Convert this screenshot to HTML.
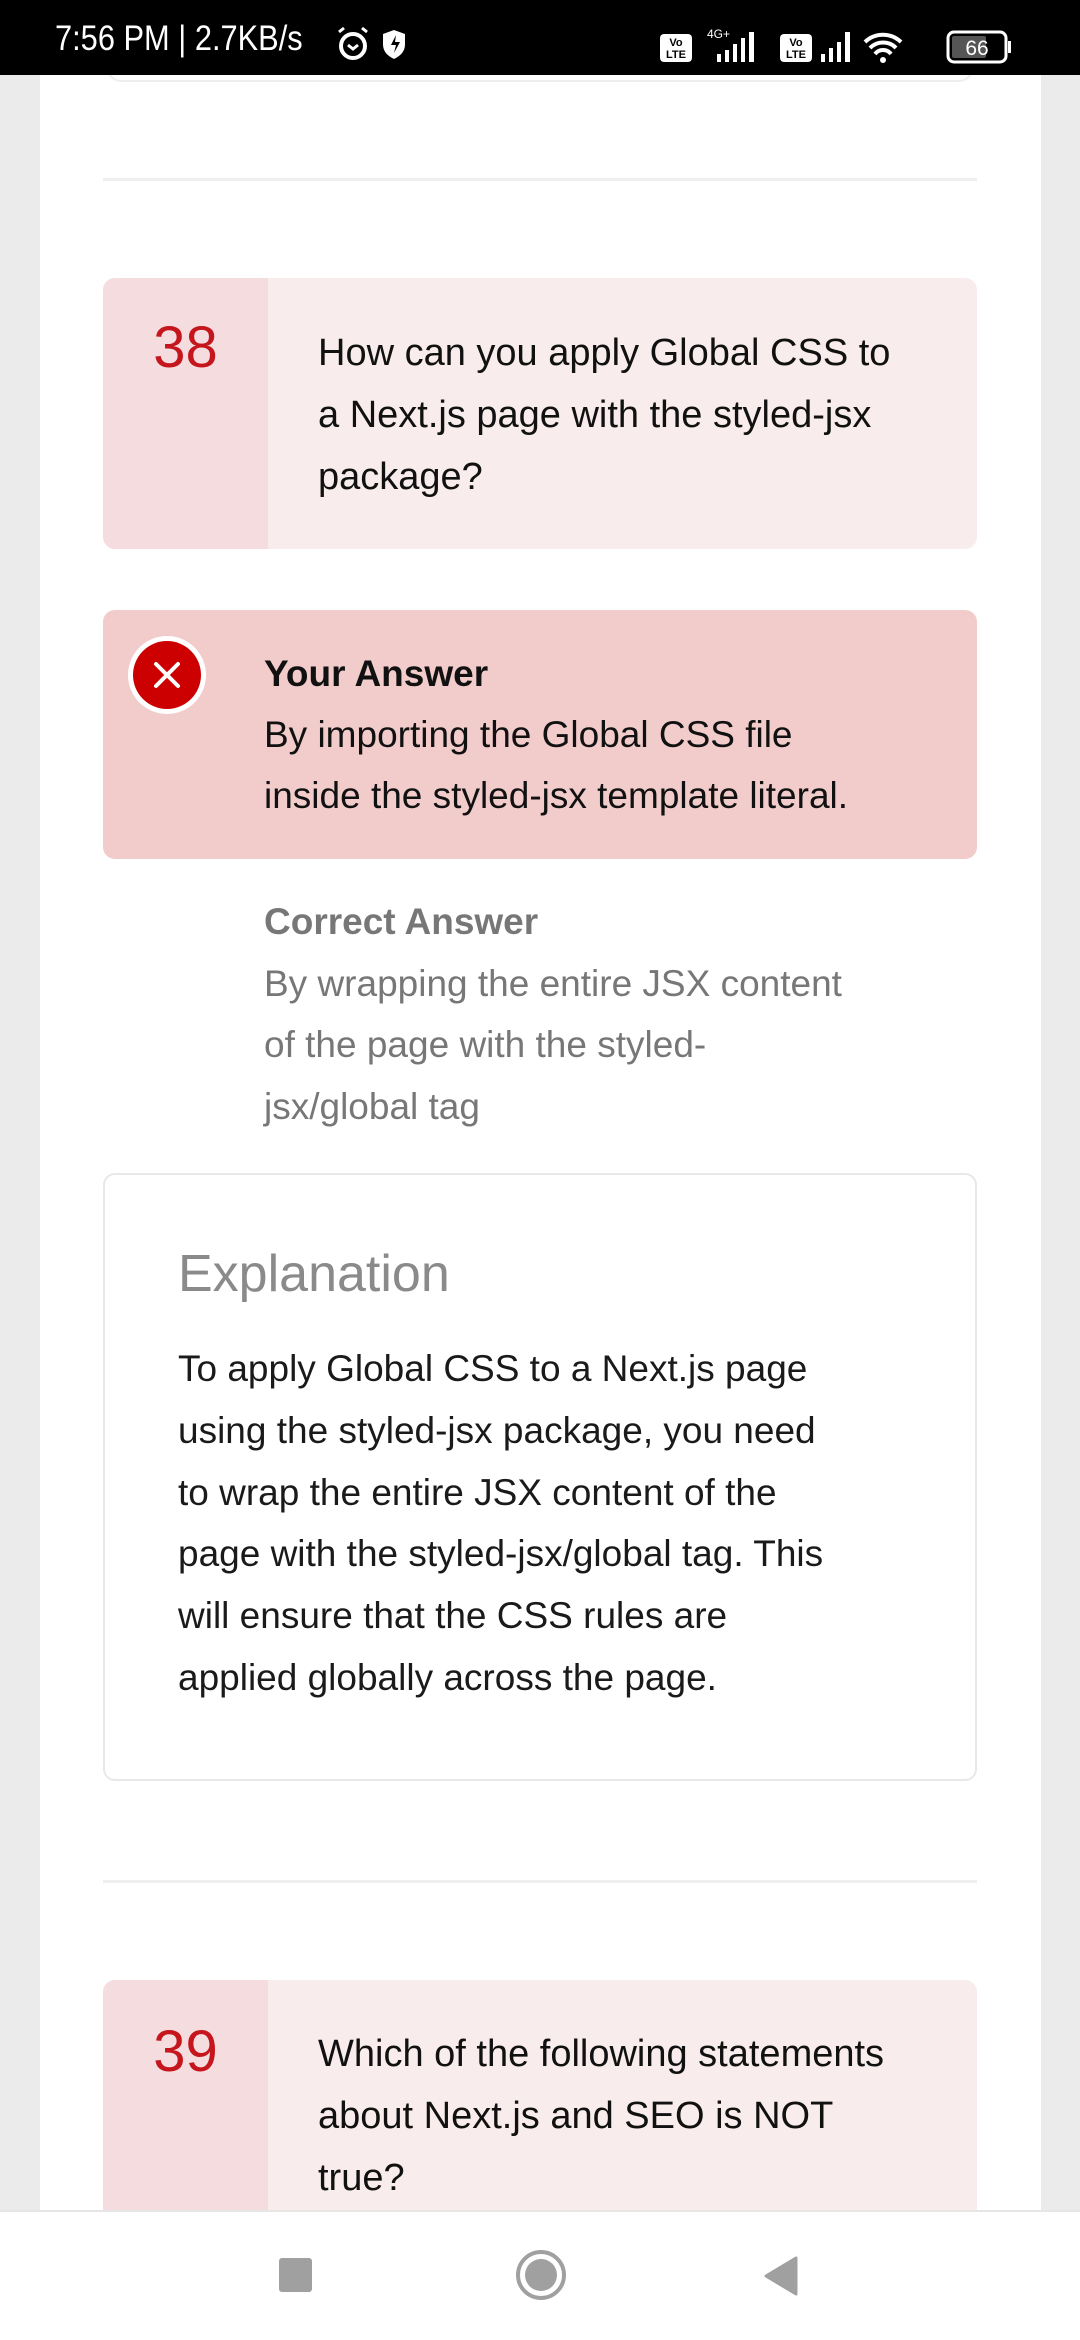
<!DOCTYPE html>
<html><head><meta charset="utf-8">
<style>
*{margin:0;padding:0;box-sizing:border-box}
body{width:1080px;height:2340px;overflow:hidden;background:#ebebeb;font-family:"Liberation Sans",sans-serif;position:relative}
.abs{position:absolute}
.card{left:40px;top:0;width:1001px;height:2340px;background:#fff}
.status{left:0;top:0;width:1080px;height:75px;background:#000;color:#fff}
.line{white-space:nowrap}
.sep{height:3px;background:#efefef;left:103px;width:874px}
.q{left:103px;width:874px;background:#f9ecec;border-radius:12px;overflow:hidden}
.qn{left:0;top:0;width:165px;height:100%;background:#f5dcdf}
.num{color:#c4161c;font-size:58px;width:165px;text-align:center}
.qt{left:215px;font-size:38px;color:#111;line-height:62px}
</style></head><body>
<div class="abs card"></div>
<div class="abs" style="left:107px;top:60px;width:866px;height:22px;border:2px solid #eee;border-top:none;border-radius:0 0 14px 14px"></div>
<div class="abs status">
 <div class="abs" style="left:55px;top:20px;font-size:35px;line-height:38px;transform:scaleX(0.88);transform-origin:0 0">7:56 PM | 2.7KB/s</div>
 <svg class="abs" style="left:334px;top:24px" width="80" height="40" viewBox="0 0 80 40">
  <circle cx="19" cy="22" r="12" fill="none" stroke="#fff" stroke-width="4"/>
  <path d="M14 21l5 4 5-4" fill="none" stroke="#fff" stroke-width="3"/>
  <path d="M5 8l5-4M33 8l-5-4" stroke="#fff" stroke-width="3"/>
  <path d="M60 6l11 4v10c0 8-5 12-11 15-6-3-11-7-11-15V10z" fill="#fff"/>
  <path d="M62 11l-5 10h5l-2 8 6-11h-5z" fill="#000"/>
 </svg>
 <svg class="abs" style="left:655px;top:26px" width="365" height="40" viewBox="0 0 365 40">
  <rect x="5" y="8" width="32" height="28" rx="4" fill="#fff"/>
  <text x="21" y="20" font-size="11" font-family="Liberation Sans" text-anchor="middle" font-weight="bold">Vo</text>
  <text x="21" y="32" font-size="11" font-family="Liberation Sans" text-anchor="middle" font-weight="bold">LTE</text>
  <text x="52" y="12" font-size="12" fill="#fff" font-family="Liberation Sans">4G+</text>
  <rect x="62" y="28" width="4" height="8" fill="#fff"/><rect x="70" y="24" width="4" height="12" fill="#fff"/><rect x="78" y="18" width="4" height="18" fill="#fff"/><rect x="86" y="12" width="4" height="24" fill="#fff"/><rect x="94" y="6" width="5" height="30" fill="#fff"/>
  <rect x="125" y="8" width="32" height="28" rx="4" fill="#fff"/>
  <text x="141" y="20" font-size="11" font-family="Liberation Sans" text-anchor="middle" font-weight="bold">Vo</text>
  <text x="141" y="32" font-size="11" font-family="Liberation Sans" text-anchor="middle" font-weight="bold">LTE</text>
  <rect x="166" y="28" width="4" height="8" fill="#fff"/><rect x="174" y="22" width="4" height="14" fill="#fff"/><rect x="182" y="16" width="4" height="20" fill="#fff"/><rect x="190" y="6" width="5" height="30" fill="#fff"/>
  <path d="M210 16a26 26 0 0 1 36 0M215 22a18 18 0 0 1 26 0M220 28a10 10 0 0 1 16 0" fill="none" stroke="#fff" stroke-width="4"/>
  <circle cx="228" cy="34" r="3" fill="#fff"/>
  <rect x="293" y="6" width="58" height="30" rx="6" fill="none" stroke="#fff" stroke-width="3"/>
  <rect x="297" y="10" width="34" height="22" rx="2" fill="#555"/>
  <rect x="353" y="15" width="3" height="12" fill="#fff"/>
  <text x="322" y="29" font-size="21" fill="#fff" font-family="Liberation Sans" text-anchor="middle">66</text>
 </svg>
</div>

<div class="abs sep" style="top:178px"></div>

<div class="abs q" style="top:278px;height:271px">
 <div class="abs qn"></div>
 <div class="abs num" style="top:36px">38</div>
 <div class="abs qt line" style="top:44px">How can you apply Global CSS to<br>a Next.js page with the styled-jsx<br>package?</div>
</div>

<div class="abs" style="left:103px;top:610px;width:874px;height:249px;background:#f2cbcb;border-radius:12px"></div>
<div class="abs" style="left:128px;top:636px;width:78px;height:78px;border-radius:50%;background:#fff"></div>
<div class="abs" style="left:133px;top:641px;width:68px;height:68px;border-radius:50%;background:#cc0000"></div>
<svg class="abs" style="left:133px;top:641px" width="68" height="68"><path d="M23 23l22 22M45 23L23 45" stroke="#fff" stroke-width="4" stroke-linecap="round"/></svg>
<div class="abs line" style="left:264px;top:643px;font-size:37px;line-height:61px;color:#111"><b>Your Answer</b><br>By importing the Global CSS file<br>inside the styled-jsx template literal.</div>

<div class="abs line" style="left:264px;top:891px;font-size:37px;line-height:61.5px;color:#777"><b>Correct Answer</b><br>By wrapping the entire JSX content<br>of the page with the styled-<br>jsx/global tag</div>

<div class="abs" style="left:103px;top:1173px;width:874px;height:608px;border:2px solid #e8e8e8;border-radius:12px"></div>
<div class="abs line" style="left:178px;top:1244px;font-size:52px;color:#8a8a8a">Explanation</div>
<div class="abs line" style="left:178px;top:1338px;font-size:37px;line-height:61.8px;color:#1a1a1a">To apply Global CSS to a Next.js page<br>using the styled-jsx package, you need<br>to wrap the entire JSX content of the<br>page with the styled-jsx/global tag. This<br>will ensure that the CSS rules are<br>applied globally across the page.</div>

<div class="abs sep" style="top:1880px"></div>

<div class="abs q" style="top:1980px;height:300px">
 <div class="abs qn"></div>
 <div class="abs num" style="top:38px">39</div>
 <div class="abs qt line" style="top:43px">Which of the following statements<br>about Next.js and SEO is NOT<br>true?</div>
</div>

<div class="abs" style="left:0;top:2210px;width:1080px;height:130px;background:#fff;border-top:2px solid #e6e6e6"></div>
<div class="abs" style="left:279px;top:2258px;width:33px;height:34px;background:#a0a0a0;border-radius:3px"></div>
<div class="abs" style="left:516px;top:2250px;width:50px;height:50px;border-radius:50%;border:4px solid #a0a0a0"></div>
<div class="abs" style="left:525px;top:2259px;width:32px;height:32px;border-radius:50%;background:#a0a0a0"></div>
<svg class="abs" style="left:762px;top:2256px" width="36" height="40"><path d="M34 2V38L4 20Z" fill="#a0a0a0" stroke="#a0a0a0" stroke-linejoin="round" stroke-width="3"/></svg>
</body></html>
